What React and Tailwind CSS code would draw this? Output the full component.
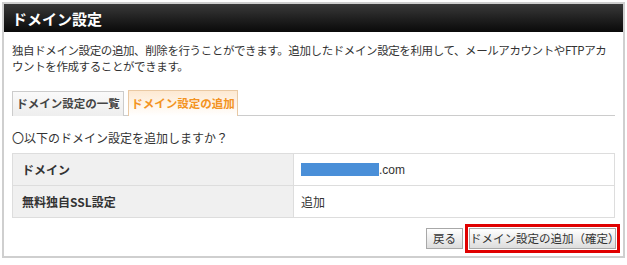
const font = { fontFamily: '"Noto Sans CJK JP", "Liberation Sans", sans-serif' };

const App = () => {
  return (
    <div className="w-[627px] h-[265px] bg-white pt-[2px] pl-[2px]" style={font}>
      <div className="w-[623px] h-[256px] border-2 border-[#cfcfcf] bg-white">
        <div className="h-[28px] bg-gradient-to-b from-[#3a3a3a] to-[#0a0a0a] flex items-center pl-[8px]">
          <h1 className="text-white font-bold text-[15px] leading-none">ドメイン設定</h1>
        </div>
        <div className="px-[8px]">
          <div className="text-[11.5px] leading-[16px] text-[#333] mt-[10px] tracking-[-0.4px]">
            <p className="whitespace-nowrap">独自ドメイン設定の追加、削除を行うことができます。追加したドメイン設定を利用して、メールアカウントやFTPアカ</p>
            <p className="whitespace-nowrap">ウントを作成することができます。</p>
          </div>
          <div className="mt-[17px] flex items-end gap-[4px] border-b border-[#cccccc] h-[25px]">
            <div className="h-[25px] w-[112px] flex items-center justify-center border border-b-0 border-[#cccccc] bg-gradient-to-b from-[#fafafa] to-[#eeeeee] text-[11.5px] font-bold text-[#444] -mb-px">
              ドメイン設定の一覧
            </div>
            <div className="h-[26px] w-[110px] flex items-center justify-center border border-b-0 border-[#e9c9a4] bg-gradient-to-b from-[#fde9d2] to-white text-[11.5px] font-bold text-[#f39322] -mb-px">
              ドメイン設定の追加
            </div>
          </div>
          <p className="text-[12px] text-[#333] mt-[14px] leading-[16px]">〇以下のドメイン設定を追加しますか？</p>
          <table className="w-full mt-[7px] border-collapse text-[12px] text-[#333]">
            <tbody>
              <tr className="h-[32px]">
                <th className="w-[281px] bg-[#f0f0f0] border border-[#dddddd] text-left font-bold pl-[9px] text-[12px]">ドメイン</th>
                <td className="border border-[#dddddd] pl-[7px]">
                  <div className="flex items-center">
                    <span className="inline-block w-[78px] h-[13px] bg-[#4a8fd8]" />
                    <span className="text-[12px]" style={{ fontFamily: '"Liberation Sans", sans-serif' }}>.com</span>
                  </div>
                </td>
              </tr>
              <tr className="h-[32px]">
                <th className="bg-[#f0f0f0] border border-[#dddddd] text-left font-bold pl-[9px] text-[12px]">無料独自SSL設定</th>
                <td className="border border-[#dddddd] pl-[7px]">追加</td>
              </tr>
            </tbody>
          </table>
          <div className="flex justify-end items-center mt-[6px] gap-[2px] mr-[-5px]">
            <button className="h-[21px] px-[6px] border border-[#a8a8a8] bg-gradient-to-b from-white to-[#dddddd] text-[11.5px] text-[#333] leading-none">
              戻る
            </button>
            <div className="border-[3px] border-[#e00000] p-[1px]">
              <button className="h-[21px] w-[147px] border border-[#a8a8a8] bg-gradient-to-b from-white to-[#dddddd] text-[11.5px] text-[#333] leading-none block">
                ドメイン設定の追加（確定）
              </button>
            </div>
          </div>
        </div>
      </div>
    </div>
  );
};

export default App;
